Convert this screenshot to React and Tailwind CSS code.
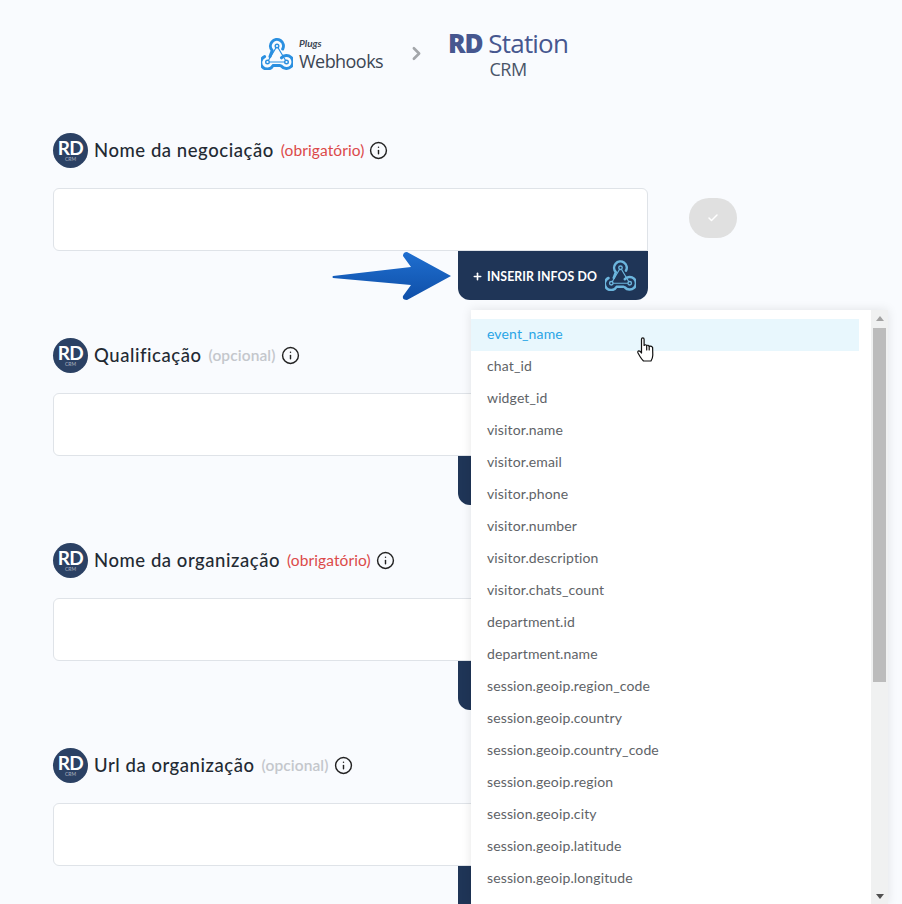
import { Info, Plus, Check, ChevronRight } from "lucide-react";

const font = { fontFamily: "Lato, 'Open Sans', sans-serif" };
const logoFont = { fontFamily: "'Open Sans', sans-serif" };

function WebhookIcon({ className, color = "#2a8fe0", hole = "#f9fbfe", weight = "3" }) {
  return (
    <svg viewBox="0 0 32 32" className={className} fill="none" stroke={color} strokeWidth={weight} strokeLinecap="round" strokeLinejoin="round">
      <path d="M9 18.5 L11.2 12.5 A6.5 6.5 0 1 1 21.7 11" />
      <path d="M3.6 18.6 A6.5 6.5 0 1 0 12 27.6 L19 27.6" />
      <path d="M20.5 19.8 A6.5 6.5 0 1 1 20.5 28.2" />
      <path d="M16 8 L6.5 24 L25.5 24 Z" strokeWidth="1.2" />
      <circle cx="16" cy="8" r="1.8" fill={hole} strokeWidth="1.4" />
      <circle cx="6.5" cy="24" r="1.8" fill={hole} strokeWidth="1.4" />
      <circle cx="25.5" cy="24" r="1.8" fill={hole} strokeWidth="1.4" />
    </svg>
  );
}

function RdBadge() {
  return (
    <div className="flex h-[35px] w-[35px] shrink-0 flex-col items-center justify-center rounded-full bg-[#2b4164] text-white">
      <span className="text-[19px] leading-[16px] font-bold tracking-[-0.5px]">RD</span>
      <span className="text-[5px] leading-[6px] text-white/60">CRM</span>
    </div>
  );
}

const sections = [
  { title: "Nome da negociação", tag: "(obrigatório)", required: true },
  { title: "Qualificação", tag: "(opcional)", required: false },
  { title: "Nome da organização", tag: "(obrigatório)", required: true },
  { title: "Url da organização", tag: "(opcional)", required: false },
];

const items = [
  "event_name", "chat_id", "widget_id", "visitor.name", "visitor.email", "visitor.phone",
  "visitor.number", "visitor.description", "visitor.chats_count", "department.id",
  "department.name", "session.geoip.region_code", "session.geoip.country",
  "session.geoip.country_code", "session.geoip.region", "session.geoip.city",
  "session.geoip.latitude", "session.geoip.longitude",
];

function Section({ s, first }) {
  return (
    <section className="mb-[38px] flex items-start">
      <div className="w-[595px] shrink-0">
        <div className="flex h-[35px] items-center">
          <RdBadge />
          <span className="ml-[6px] text-[18.5px] font-medium tracking-[0.55px] text-[#232a33]">{s.title}</span>
          <span className={`ml-[7px] text-[15.5px] tracking-[0.1px] ${s.required ? "text-[#dc4a4a]" : "font-semibold text-[#c4c7cc]"}`}>{s.tag}</span>
          <Info className="ml-[5px] h-[19px] w-[19px] text-[#222]" strokeWidth={1.8} />
        </div>
        <div className="mt-[20px] h-[63px] rounded-t-md rounded-bl-md border border-[#dfe3e8] bg-white" />
        <div className="ml-[405px] flex h-[49px] w-[190px] items-center rounded-b-xl bg-[#1f3557] pl-[14px] text-white">
          {first && (
            <>
              <Plus className="mt-[1px] h-[11px] w-[11px]" strokeWidth={3.5} />
              <span className="mt-[3px] ml-[4px] text-[12.3px] font-bold tracking-[0.1px]">INSERIR INFOS DO</span>
              <WebhookIcon className="ml-[8px] h-[31px] w-[31px]" color="#6cb6de" hole="#1f3557" weight="2.6" />
            </>
          )}
        </div>
      </div>
      {first && (
        <div className="mt-[65px] ml-[41px] flex h-[40px] w-[48px] items-center justify-center rounded-full bg-[#e0e0e0]">
          <Check className="h-[12px] w-[12px] text-white" strokeWidth={3} />
        </div>
      )}
    </section>
  );
}

export default function App() {
  return (
    <div style={font} className="relative h-[904px] w-[902px] overflow-hidden bg-[#f9fbfe]">
      <header className="flex h-[133px] items-start pt-[28px] pl-[261px]">
        <WebhookIcon className="mt-[10px] h-[32px] w-[32px]" />
        <div className="ml-[6px] flex flex-col">
          <span className="mt-[9px] text-[10px] leading-[12px] font-bold text-[#3c4654] italic">Plugs</span>
          <span style={logoFont} className="mt-[1px] text-[18px] leading-[22px] tracking-[-0.55px] text-[#3c4654]">Webhooks</span>
        </div>
        <ChevronRight className="mt-[15px] ml-[23px] h-[21px] w-[21px] text-[#a3a6aa]" strokeWidth={3} />
        <div style={logoFont} className="ml-[21px] flex flex-col items-center text-[#46578f]">
          <span className="text-[26px] leading-[30px] tracking-[-0.8px] whitespace-nowrap">
            <span className="font-extrabold tracking-[-1.2px]">RD</span> Station
          </span>
          <span className="mt-[1px] text-[18px] leading-[20px] tracking-[-0.5px] text-[#4a5568]">CRM</span>
        </div>
      </header>

      <main className="pl-[53px]">
        {sections.map((s, i) => (
          <Section key={s.title} s={s} first={i === 0} />
        ))}
      </main>

      {/* blue arrow */}
      <svg className="absolute top-[250px] left-[331px]" width="122" height="52" viewBox="0 0 122 52">
        <defs>
          <linearGradient id="arrowFill" x1="0" y1="0" x2="0" y2="1">
            <stop offset="0" stopColor="#1f6fd0" />
            <stop offset="1" stopColor="#0f4fa8" />
          </linearGradient>
        </defs>
        <path
          d="M2 26 Q1 27 2 28 L80 35 L72 46 Q71 50 76 50 L120 26 L76 2 Q72 2 72 6 L80 17 Z"
          fill="url(#arrowFill)"
        />
      </svg>

      {/* dropdown */}
      <div className="absolute top-[310px] left-[471px] flex h-[594px] w-[417px] bg-white shadow-[0_0_10px_rgba(0,0,0,0.1)]">
        <ul className="w-[400px] pt-[9px] pr-[12px] text-[14px] tracking-[0.13px] text-[#606367]">
          {items.map((t, i) => (
            <li key={t} className={`flex h-[32px] items-center pb-[3px] pl-[16px] ${i === 0 ? "bg-[#e8f7fd] text-[#2aa5e6]" : ""}`}>
              {t}
            </li>
          ))}
        </ul>
        <div className="flex w-[17px] flex-col items-center bg-[#f0f1f1]">
          <div className="mt-[6px] h-0 w-0 border-r-[4px] border-b-[5px] border-l-[4px] border-r-transparent border-b-[#a3a3a3] border-l-transparent" />
          <div className="mt-[7px] h-[354px] w-[13px] bg-[#bcbcbc]" />
          <div className="mt-auto mb-[5px] h-0 w-0 border-t-[5px] border-r-[4px] border-l-[4px] border-t-[#505050] border-r-transparent border-l-transparent" />
        </div>
      </div>

      {/* cursor */}
      <svg className="absolute top-[337px] left-[637px]" width="17" height="25" viewBox="0 0 17 25" fill="#fff" stroke="#111" strokeWidth="1.2" strokeLinejoin="round" strokeLinecap="round">
        <path d="M4.5 14.5 L4.5 2.2 Q4.5 0.8 5.8 0.8 Q7.1 0.8 7.1 2.2 L7.1 8.5 Q8.5 7 9.7 8.6 Q11.2 7.6 12.2 9.4 Q14 8.6 15.6 10.4 L15.8 18 Q15.8 21 14 24 L6.5 24 Q4.5 22 3 19.5 L1 16 Q0.3 14.3 1.7 13.9 Q3 13.7 4.5 16 Z" />
        <path d="M9.7 8.6 L9.7 13 M12.2 9.4 L12.2 13" fill="none" />
      </svg>
    </div>
  );
}
